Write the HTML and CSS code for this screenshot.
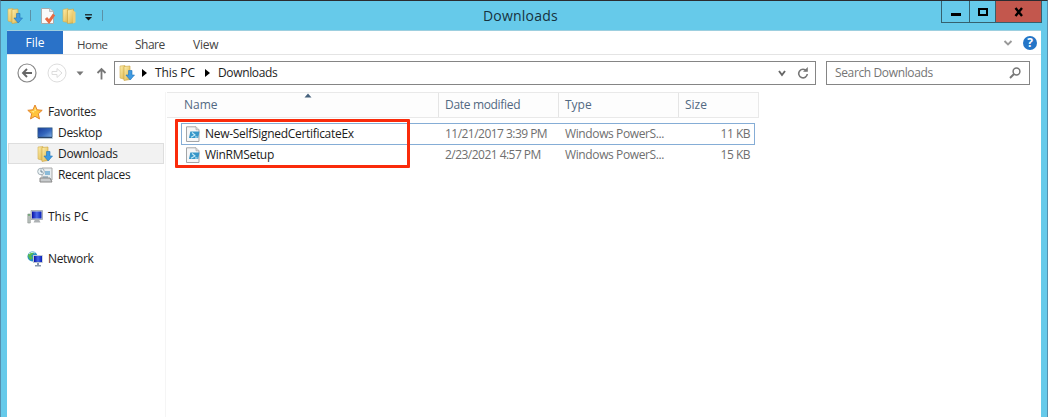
FILE: index.html
```
<!DOCTYPE html>
<html lang="en">
<head>
<meta charset="utf-8">
<title>Downloads</title>
<link rel="stylesheet" href="styles.css">
</head>
<body>
<svg class="defs" width="0" height="0" aria-hidden="true">
  <defs>
    <linearGradient id="gold" x1="0" x2="1" y2="1"><stop stop-color="#fff0ac"/><stop offset="1" stop-color="#ddb54d"/></linearGradient>
    <linearGradient id="screen" x1="0" x2="1" y2="1"><stop stop-color="#173b9a"/><stop offset=".55" stop-color="#3568bd"/><stop offset="1" stop-color="#80afe3"/></linearGradient>
    <linearGradient id="monitor" x1="0" x2="1"><stop stop-color="#0710a6"/><stop offset=".5" stop-color="#4b68e8"/><stop offset="1" stop-color="#0820b9"/></linearGradient>
    <symbol id="folder" viewBox="0 0 16 16">
      <path d="M1 1.500 6 .5v14l-5-1z" fill="url(#gold)" stroke="#d2ad4f" stroke-width=".6"/>
      <path d="M5.500 2 11.500 1v14l-6 .5z" fill="url(#gold)" stroke="#c9a13e" stroke-width=".6"/>
      <path d="M11 2.500 13.500 4v10.500l-2.500 1z" fill="#edcf78"/>
    </symbol>
    <symbol id="download" viewBox="0 0 16 16">
      <path d="M1 1 6 .5v14L1 13z" fill="url(#gold)" stroke="#d2ad4f" stroke-width=".6"/>
      <path d="M5 1.500 11 1v13.500l-6 1z" fill="url(#gold)" stroke="#c9a13e" stroke-width=".6"/>
      <path d="M9.500 5.500h3.500V10h2.500l-4.300 5-4.300-5h2.600z" fill="#3f9ae2" stroke="#2475b9" stroke-width=".6"/>
    </symbol>
    <symbol id="script" viewBox="0 0 14 16">
      <path d="M.5.8h9.500l3 3v11.700H.5z" fill="#f5f6f7" stroke="#a3a5a8"/>
      <path d="M10 .8v3h3" fill="#ddd" stroke="#a3a5a8" stroke-width=".7"/>
      <path d="M4.300 5.500h9.200L12.200 12H3z" fill="#3796c8"/>
      <path d="m6 6.500 3 2.500-4 2.300M9 11h2.500" fill="none" stroke="#c6eaf8" stroke-width="1.100"/>
    </symbol>
  </defs>
</svg>
<div class="window">
  <header class="titlebar">
    <div class="quick">
      <svg class="i16" viewBox="0 0 16 16"><use href="#download"/></svg>
      <span class="tick"></span>
      <svg class="check" viewBox="0 0 16 16"><path d="M1.500.5h8l4 3v12h-12z" fill="#fafafa" stroke="#aaa"/><path d="M9.500.5v3h4" fill="#ddd" stroke="#aaa" stroke-width=".7"/><path d="m6 10 3 3.500 5-7" fill="none" stroke="#e66b43" stroke-width="3"/></svg>
      <svg class="i16 fold" viewBox="0 0 16 16"><use href="#folder"/></svg>
      <svg class="menu" viewBox="0 0 9 7"><path d="M1 .8h7" stroke="#111" stroke-width="1.200"/><path d="M1 3h7L4.500 6.500z" fill="#111"/></svg>
      <span class="tick last"></span>
    </div>
    <h1 class="title">Downloads</h1>
    <div class="controls">
      <span class="ctl min"><svg viewBox="0 0 12 12"><path d="M1 8.500h10" stroke="#000" stroke-width="3"/></svg></span>
      <span class="ctl max"><svg viewBox="0 0 12 12"><path d="M2 3h8v6H2z" fill="none" stroke="#000" stroke-width="2"/></svg></span>
      <span class="ctl close"><svg viewBox="0 0 12 12"><path d="m2.500 2 6.500 8M9 2l-6.500 8" stroke="#000" stroke-width="2.400"/></svg></span>
    </div>
  </header>
  <main class="client">
    <nav class="ribbon">
      <span class="file">File</span><span class="tab home">Home</span><span class="tab share">Share</span><span class="tab view">View</span>
      <svg class="collapse" viewBox="0 0 10 8"><path d="m1.500 2 3.500 3.500L8.500 2" fill="none" stroke="#999" stroke-width="1.900"/></svg>
      <span class="help">?</span>
    </nav>
    <div class="address">
      <svg class="circle" viewBox="0 0 20 20"><circle cx="10" cy="10" r="9" fill="none" stroke="#888" stroke-width="1.200"/><path d="M15 10H6m4-4-4 4 4 4" fill="none" stroke="#666" stroke-width="1.900"/></svg>
      <svg class="circle fwd" viewBox="0 0 20 20"><circle cx="10" cy="10" r="9" fill="none" stroke="#ddd"/><path d="M5 8.500h5V5.500l5 4.500-5 4.500v-3H5z" fill="none" stroke="#ddd"/></svg>
      <svg class="drop" viewBox="0 0 8 5"><path d="M.5.5h7L4 4.500z" fill="#777"/></svg>
      <svg class="up" viewBox="0 0 10 13"><path d="M5 12.500V2M1 6l4-4 4 4" fill="none" stroke="#777" stroke-width="1.800"/></svg>
      <div class="path">
        <svg class="i16" viewBox="0 0 16 16"><use href="#download"/></svg>
        <svg class="arrow" viewBox="0 0 5 8"><path d="M0 0v8L5 4z"/></svg>
        <span class="crumb pc">This PC</span>
        <svg class="arrow two" viewBox="0 0 5 8"><path d="M0 0v8L5 4z"/></svg>
        <span class="crumb here">Downloads</span>
        <svg class="chev" viewBox="0 0 10 8"><path d="m2 2 3 4 3-4" fill="none" stroke="#666" stroke-width="1.900"/></svg>
        <svg class="refresh" viewBox="0 0 12 12"><path d="M9.500 4A4.300 4.300 0 1 0 10.300 7" fill="none" stroke="#777" stroke-width="1.600"/><path d="M6 4.800h4.800V0z" fill="#777"/></svg>
      </div>
      <div class="search"><span class="hint">Search Downloads</span>
        <svg class="lens" viewBox="0 0 12 12"><circle cx="7.500" cy="4.500" r="3.400" fill="none" stroke="#777" stroke-width="1.500"/><path d="M5 7 1 11" stroke="#777" stroke-width="1.900"/></svg>
      </div>
    </div>
    <div class="content">
      <aside class="sidebar">
        <div class="node">
          <svg class="i16" viewBox="0 0 16 16"><path d="m8 1 2.100 4.800 5.100.5-3.900 3.500 1.200 5.100L8 12.300l-4.500 2.600 1.200-5.100L.8 6.300l5.100-.5z" fill="#ffc43d" stroke="#e4862d"/><path d="m8 3 1.200 4L4 7l3 2" fill="#ffe787"/></svg>
          <span class="favorites">Favorites</span></div>
        <div class="node child">
          <svg class="i16" viewBox="0 0 16 16"><path d="M.3 2.200h15.400v11.600H.3z" fill="#a8bccb"/><path d="M1 3h14v9H1z" fill="url(#screen)" stroke="#345a8b" stroke-width=".6"/><path d="M1 12.500h14" stroke="#294366"/></svg>
          <span class="desktop">Desktop</span></div>
        <div class="node child active">
          <svg class="i16" viewBox="0 0 16 16"><use href="#download"/></svg>
          <span class="downloads">Downloads</span></div>
        <div class="node child">
          <svg class="i16" viewBox="0 0 16 16"><path d="M5 1h10v12H5z" fill="#e8edef" stroke="#aaa"/><path d="M3 11h10l2 4H3z" fill="#c8cbcd" stroke="#888"/><path d="M8 4h5v4H8z" fill="#8bbbd9"/><path d="M6 10h5" stroke="#6e8796"/><circle cx="4" cy="4.500" r="3.300" fill="#edf5f8" stroke="#a3afb7"/><path d="M4 2.500v2.500h2" fill="none" stroke="#526b7d" stroke-width=".8"/></svg>
          <span class="recent">Recent places</span></div>
        <div class="node root">
          <svg class="i16" viewBox="0 0 16 16"><path d="M.8 5h2.500v9H.8z" fill="#b9c2bd" stroke="#8b918d" stroke-width=".6"/><path d="M1 6h2" stroke="#4a9951"/><path d="M4 1.500h11.500v9H4z" fill="#ccd1d4" stroke="#929ba1" stroke-width=".7"/><path d="M5 2.500h9.500v7H5z" fill="url(#monitor)"/><path d="M8 10.500h4l1.500 3H6.500z" fill="#adb1b4"/></svg>
          <span class="this-pc">This PC</span></div>
        <div class="node root">
          <svg class="i16" viewBox="0 0 16 16"><circle cx="5.500" cy="5.500" r="5" fill="#2792c6"/><path d="M1 5c0-3 4-5 6-3L4 5l2 2-3 2z" fill="#58b94d"/><path d="M2 3c2-2 4-2 6-1" fill="none" stroke="#c6eee5"/><path d="M6 4h9.700v8H6z" fill="#bdc7d1"/><path d="M7 5h8v6H7z" fill="url(#monitor)"/><path d="M10 12h2v2h2v1.500H8V14h2z" fill="#8697ad"/></svg>
          <span class="network">Network</span></div>
      </aside>
      <section class="list">
        <div class="head">
          <span class="cell c-name"><b>Name</b></span><span class="cell c-date"><b class="h-date">Date modified</b></span><span class="cell c-type"><b>Type</b></span><span class="cell c-size"><b>Size</b></span>
          <svg class="sort" viewBox="0 0 8 5"><path d="M.5 4.500 4 .5l3.500 4z" fill="#46627d"/></svg>
        </div>
        <div class="rows">
          <div class="row focused">
            <span class="name"><svg class="doc" viewBox="0 0 14 16"><use href="#script"/></svg><span class="cert">New-SelfSignedCertificateEx</span></span>
            <span class="date">11/21/2017 3:39 PM</span><span class="type">Windows PowerS...</span><span class="size">11 KB</span>
          </div>
          <div class="row">
            <span class="name"><svg class="doc" viewBox="0 0 14 16"><use href="#script"/></svg><span class="cert">WinRMSetup</span></span>
            <span class="date">2/23/2021 4:57 PM</span><span class="type">Windows PowerS...</span><span class="size">15 KB</span>
          </div>
          <div class="callout"></div>
        </div>
      </section>
    </div>
  </main>
</div>
</body>
</html>
```

FILE: styles.css
```
* { box-sizing: border-box; }
body { margin: 0; overflow: hidden; font: 12px/20px "Open Sans", "Noto Sans", sans-serif; color: #1e1e1e; }
svg { display: block; flex: none; }
span, b, h1 { white-space: nowrap; }
.defs { position: absolute; }
.window { height: 417px; padding: 0 6px; background: #66caea; border-top: 1px solid #2b2b30; border-left: 1px solid #5590af; border-right: 1px solid #5590af; }
.titlebar { position: relative; height: 30px; display: flex; justify-content: space-between; border-bottom: 1px solid #9dcfdf; }
.quick { display: flex; align-items: center; height: 29px; padding-left: 1px; }
.i16 { width: 16px; height: 16px; }
.tick { width: 1px; height: 11px; background: #5b91a7; margin: 0 9px 0 6px; }
.check { width: 16px; height: 16px; }
.fold { margin-left: 6px; }
.quick .i16:first-child { margin-left: -1px; margin-right: 1px; }
.menu { width: 9px; height: 7px; margin: 3px 0 0 6px; }
.tick.last { margin: 0 0 0 9px; }
.title { position: absolute; left: 476px; top: 5px; margin: 0; font-size: 14px; font-weight: 400; color: #16323e; letter-spacing: .2px; }
.controls { display: flex; height: 22px; margin-right: -1px; border: 1px solid #35606e; border-top: 0; }
.ctl { display: flex; align-items: center; justify-content: center; padding-top: 1px; }
.ctl svg { width: 12px; height: 12px; }
.min { width: 27px; }
.max { width: 26px; border-left: 1px solid #35606e; }
.close { width: 46px; background: #c3574d; border-left: 1px solid #35606e; }
.client { height: 386px; background: #fff; display: flex; flex-direction: column; }
.ribbon { display: flex; align-items: center; height: 24px; border-bottom: 1px solid #e4e4e4; color: #444; }
.file { align-self: stretch; width: 56px; background: #2a72c8; color: #fff; text-align: center; line-height: 24px; }
.tab { margin-top: 4px; letter-spacing: -.5px; }
.home { width: 58px; margin-left: 14px; font-size: 11.5px; }
.share { width: 58px; }
.view { width: 60px; letter-spacing: -.2px; }
.collapse { width: 10px; height: 8px; margin-left: auto; }
.help { width: 14px; height: 14px; border-radius: 50%; background: #2475c7; color: #fff; font-weight: 700; line-height: 14px; text-align: center; margin: 0 4px 0 10px; }
.address { display: flex; height: 37px; padding: 6px 11px 7px 10px; align-items: center; }
.circle { width: 20px; height: 20px; }
.fwd { margin-left: 10px; }
.drop { width: 8px; height: 5px; margin-left: 9px; }
.up { width: 11px; height: 13px; margin-left: 12px; }
.path { display: flex; align-items: center; width: 702px; height: 24px; margin-left: 7px; border: 1px solid #858585; padding: 0 6px 0 4px; }
.arrow { width: 5px; height: 8px; margin: 0 8px 0 7px; }
.pc { width: 41px; letter-spacing: -.1px; }
.here { letter-spacing: -.35px; }
.two { margin-left: 9px; margin-right: 8px; }
.chev { width: 10px; height: 8px; margin-left: auto; }
.refresh { width: 12px; height: 12px; margin-left: 10px; }
.search { display: flex; align-items: center; width: 204px; height: 24px; margin-left: 10px; border: 1px solid #858585; padding: 0 8px; color: #757575; letter-spacing: -.37px; }
.lens { width: 12px; height: 12px; margin-left: auto; }
.content { flex: 1; display: flex; }
.sidebar { width: 159px; padding: 9px 1px 0 1px; border-right: 1px solid #f5f5f5; letter-spacing: -.33px; }
.node { display: flex; align-items: center; height: 21px; padding-left: 19px; gap: 5px; }
.child { padding-left: 29px; }
.active { background: #f2f2f2; outline: 1px solid #dedede; outline-offset: -1px; }
.root { margin-top: 21px; }
.this-pc { letter-spacing: 0; }
.list { padding-left: 1px; }
.head { position: relative; display: flex; width: 592px; height: 26px; border: 1px solid #e9e9e9; border-left: 0; background: #fdfdfd; color: #526982; }
.cell { height: 24px; line-height: 24px; padding-left: 6px; border-right: 1px solid #e5e5e5; }
.cell b { font-weight: 400; }
.c-name { width: 272px; padding-left: 17px; }
.c-date, .c-type { width: 120px; }
.h-date { letter-spacing: -.32px; }
.c-size { border: 0; }
.sort { position: absolute; left: 137px; top: 0; width: 8px; height: 5px; }
.rows { position: relative; width: 574px; margin: 5px 0 0 14px; }
.row { display: flex; align-items: center; height: 20px; color: #6f6f6f; border: 1px solid transparent; }
.focused { height: 22px; border-color: #85add6; }
.name { display: flex; align-items: center; width: 263px; padding-left: 4px; gap: 5px; color: #1c1c1c; }
.cert { letter-spacing: -.3px; }
.doc { width: 14px; height: 16px; }
.date, .type { width: 120px; }
.date { letter-spacing: -.53px; }
.type { letter-spacing: -.38px; }
.size { width: 65px; text-align: right; letter-spacing: -.5px; }
.callout { position: absolute; left: -6px; top: -4px; width: 235px; height: 49px; border: 3px solid #fa2b0b; border-radius: 1px; }
```
